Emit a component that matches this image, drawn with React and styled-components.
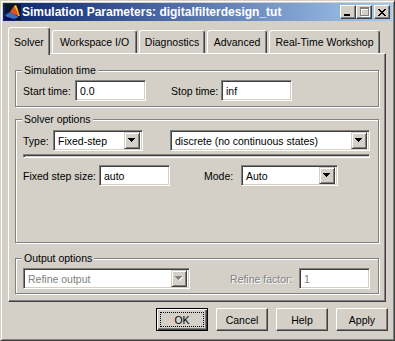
import React from "react";
import styled, { createGlobalStyle, css } from "styled-components";

const GlobalStyle = createGlobalStyle`
  html, body {
    margin: 0;
    padding: 0;
    background: #d4d0c8;
  }
`;

// rows of the close "X" glyph, 8x7 pixels
const CLOSE_ROWS = ["XX....XX", ".XX..XX.", "..XXXX..", "...XX...", "..XXXX..", ".XX..XX.", "XX....XX"];

const MatlabIcon = () => (
  <svg width="16" height="16" viewBox="0 0 16 16">
    <rect width="16" height="16" fill="#0c1430" />
    <path d="M0 11 L5 8 L8 10 L14 13 L9 15 L2 13 Z" fill="#3a6cc0" />
    <path d="M5 8 L9 2 L11 6 L13 12 L8 10 Z" fill="#e0521c" />
    <path d="M9 2 L11 1 L13 6 L11 6 Z" fill="#f7c81e" />
    <path d="M11 6 L13 6 L15 12 L13 12 Z" fill="#f39a1a" />
  </svg>
);

const CloseGlyph = () => (
  <svg width="8" height="7" viewBox="0 0 8 7" shapeRendering="crispEdges">
    {CLOSE_ROWS.map((row, y) =>
      row.split("").map((c, x) => (c === "X" ? <rect key={`${x}-${y}`} x={x} y={y} width="1" height="1" fill="#000" /> : null))
    )}
  </svg>
);

const MinGlyph = () => (
  <svg width="10" height="9" viewBox="0 0 10 9" shapeRendering="crispEdges">
    <rect x="1" y="6" width="6" height="2" fill="#000" />
  </svg>
);

const MaxGlyph = () => (
  <svg width="11" height="10" viewBox="0 0 11 10" shapeRendering="crispEdges">
    <path d="M2 1h9v9h-9z M3 3v6h7v-6z" fill="#fff" fillRule="evenodd" />
    <path d="M1 0h9v9h-9z M2 2v6h7v-6z" fill="#808080" fillRule="evenodd" />
  </svg>
);

const Arrow = ({ disabled }) => (
  <svg width="8" height="5" viewBox="0 0 8 5" shapeRendering="crispEdges">
    {disabled && <path d="M1 1h7l-3.5 4z" fill="#fff" />}
    <path d="M0 0h7l-3.5 4z" fill={disabled ? "#808080" : "#000"} />
  </svg>
);

const Window = styled.div`
  width: 395px;
  height: 341px;
  box-sizing: border-box;
  display: flex;
  flex-direction: column;
  padding: 2px;
  background: #d4d0c8;
  border: 1px solid;
  border-color: #d4d0c8 #404040 #404040 #d4d0c8;
  box-shadow: inset 1px 1px #fff, inset -1px -1px #808080;
  font-family: "Liberation Sans", Arial, sans-serif;
  font-size: 10.5px;
  color: #000;
`;

const TitleBar = styled.div`
  height: 18px;
  display: flex;
  align-items: center;
  padding: 0 2px;
  background: linear-gradient(to right, #0a246a, #a6caf0);
  color: #fff;
  font-weight: bold;
  font-size: 12px;
`;

const TitleText = styled.span`
  flex: 1;
  margin-left: 1px;
  white-space: nowrap;
`;

const CaptionButton = styled.div`
  width: 16px;
  height: 14px;
  box-sizing: border-box;
  margin-left: ${(p) => p.$gap || 0}px;
  background: #d4d0c8;
  border: 1px solid;
  border-color: #fff #404040 #404040 #fff;
  box-shadow: inset -1px -1px #808080;
  display: flex;
  align-items: center;
  justify-content: center;
`;

const TabStrip = styled.div`
  display: flex;
  align-items: flex-end;
  margin: 6px 0 0 5px;
  position: relative;
  z-index: 1;
`;

const Tab = styled.div`
  width: ${(p) => p.$w}px;
  height: ${(p) => (p.$active ? 28 : 23)}px;
  margin-left: ${(p) => p.$ml || 0}px;
  margin-bottom: ${(p) => (p.$active ? -2 : 0)}px;
  box-sizing: border-box;
  border: 1px solid;
  border-bottom: none;
  border-color: #fff #404040 transparent #fff;
  border-radius: 3px 3px 0 0;
  box-shadow: inset -1px 0 #808080;
  background: #d4d0c8;
  display: flex;
  align-items: center;
  justify-content: center;
  white-space: nowrap;
`;

const Panel = styled.div`
  margin-left: 5px;
  width: 378px;
  height: 249px;
  box-sizing: border-box;
  border: 1px solid;
  border-color: #fff #404040 #404040 #fff;
  box-shadow: inset -1px -1px #808080;
  padding: 10px 6px 0 6px;
  display: flex;
  flex-direction: column;
`;

const Group = styled.fieldset`
  margin: ${(p) => p.$mt || 0}px 0 0 0;
  padding: ${(p) => p.$pt}px 7px ${(p) => p.$pb}px 7px;
  border: 1px solid #808080;
  box-shadow: inset 1px 1px #fff, 1px 1px #fff;
  min-inline-size: 0;
`;

const Legend = styled.legend`
  padding: 0 2px;
  margin-left: -1px;
  line-height: 13px;
  background: #d4d0c8;
`;

const Row = styled.div`
  display: flex;
  align-items: center;
  height: 21px;
`;

const Label = styled.span`
  width: ${(p) => p.$w}px;
  margin-left: ${(p) => p.$ml || 0}px;
  flex-shrink: 0;
  white-space: nowrap;
  ${(p) =>
    p.$disabled &&
    css`
      color: #808080;
      text-shadow: 1px 1px #fff;
    `}
`;

const sunken = css`
  height: 21px;
  box-sizing: border-box;
  flex-shrink: 0;
  background: #fff;
  border: 1px solid;
  border-color: #808080 #fff #fff #808080;
  box-shadow: inset 1px 1px #404040, inset -1px -1px #d4d0c8;
`;

const TextBox = styled.div`
  ${sunken};
  width: ${(p) => p.$w}px;
  margin-left: ${(p) => p.$ml || 0}px;
  padding: 0 4px;
  display: flex;
  align-items: center;
  color: ${(p) => (p.$disabled ? "#808080" : "#000")};
`;

const Combo = styled.div`
  ${sunken};
  width: ${(p) => p.$w}px;
  margin-left: ${(p) => p.$ml || 0}px;
  padding: 2px;
  display: flex;
  align-items: center;
  color: ${(p) => (p.$disabled ? "#808080" : "#000")};
`;

const ComboText = styled.span`
  flex: 1;
  padding-left: 2px;
  white-space: nowrap;
  overflow: hidden;
`;

const DropButton = styled.div`
  width: 16px;
  height: 17px;
  box-sizing: border-box;
  background: #d4d0c8;
  border: 1px solid;
  border-color: #d4d0c8 #404040 #404040 #d4d0c8;
  box-shadow: inset 1px 1px #fff, inset -1px -1px #808080;
  display: flex;
  align-items: center;
  justify-content: center;
`;

const Divider = styled.div`
  width: 347px;
  height: 4px;
  box-sizing: border-box;
  margin: 3px 0 7px;
  border: 1px solid;
  border-color: #808080 #fff #fff #808080;
  box-shadow: inset 1px 1px #404040;
`;

const ButtonBar = styled.div`
  display: flex;
  justify-content: flex-end;
  gap: 8px;
  margin-top: 6px;
  padding-right: 4px;
`;

const Button = styled.button`
  width: 52px;
  height: 23px;
  padding: 0;
  font-family: inherit;
  font-size: 10.5px;
  color: #000;
  background: #d4d0c8;
  border: 1px solid;
  border-color: #fff #404040 #404040 #fff;
  box-shadow: inset -1px -1px #808080;
  ${(p) =>
    p.$default &&
    css`
      border-color: #000;
      box-shadow: inset 1px 1px #fff, inset -1px -1px #404040, inset -2px -2px #808080;
      outline: 1px dotted #000;
      outline-offset: -5px;
    `}
`;

const Select = ({ w, ml, value, disabled }) => (
  <Combo $w={w} $ml={ml} $disabled={disabled}>
    <ComboText>{value}</ComboText>
    <DropButton>
      <Arrow disabled={disabled} />
    </DropButton>
  </Combo>
);

const tabs = [
  { name: "Solver", w: 42, ml: 0, active: true },
  { name: "Workspace I/O", w: 85, ml: 2 },
  { name: "Diagnostics", w: 66, ml: 2 },
  { name: "Advanced", w: 60, ml: 2 },
  { name: "Real-Time Workshop", w: 111, ml: 2 },
];

const App = () => {
  return (
    <>
      <GlobalStyle />
      <Window>
        <TitleBar>
          <MatlabIcon />
          <TitleText>Simulation Parameters: digitalfilterdesign_tut</TitleText>
          <CaptionButton>
            <MinGlyph />
          </CaptionButton>
          <CaptionButton>
            <MaxGlyph />
          </CaptionButton>
          <CaptionButton $gap={2}>
            <CloseGlyph />
          </CaptionButton>
        </TitleBar>

        <TabStrip>
          {tabs.map((t) => (
            <Tab key={t.name} $w={t.w} $ml={t.ml} $active={t.active}>
              {t.name}
            </Tab>
          ))}
        </TabStrip>

        <Panel>
          <Group $pt={3} $pb={5}>
            <Legend>Simulation time</Legend>
            <Row>
              <Label $w={52}>Start time:</Label>
              <TextBox $w={71}>0.0</TextBox>
              <Label $w={50} $ml={25}>Stop time:</Label>
              <TextBox $w={71}>inf</TextBox>
            </Row>
          </Group>

          <Group $mt={6} $pt={4} $pb={56}>
            <Legend>Solver options</Legend>
            <Row>
              <Label $w={30}>Type:</Label>
              <Select w={90} value="Fixed-step" />
              <Select w={200} ml={27} value="discrete (no continuous states)" />
            </Row>
            <Divider />
            <Row>
              <Label $w={76}>Fixed step size:</Label>
              <TextBox $w={71}>auto</TextBox>
              <Label $w={37} $ml={34}>Mode:</Label>
              <Select w={97} value="Auto" />
            </Row>
          </Group>

          <Group $mt={9} $pt={3} $pb={4}>
            <Legend>Output options</Legend>
            <Row>
              <Select w={167} value="Refine output" disabled />
              <Label $w={69} $ml={40} $disabled>
                Refine factor:
              </Label>
              <TextBox $w={71} $disabled>
                1
              </TextBox>
            </Row>
          </Group>
        </Panel>

        <ButtonBar>
          <Button $default>OK</Button>
          <Button>Cancel</Button>
          <Button>Help</Button>
          <Button>Apply</Button>
        </ButtonBar>
      </Window>
    </>
  );
};

export default App;
